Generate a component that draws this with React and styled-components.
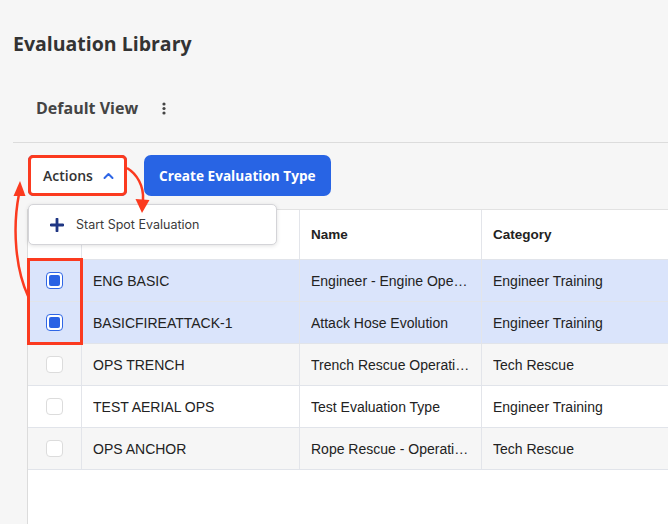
import React from "react";
import styled, { createGlobalStyle } from "styled-components";

const GlobalStyle = createGlobalStyle`
  html, body {
    margin: 0;
    padding: 0;
    background: #f6f6f6;
  }
  * {
    box-sizing: border-box;
  }
`;

const RED = "#fb3a1f";

const Page = styled.div`
  position: relative;
  width: 668px;
  height: 524px;
  overflow: hidden;
  background: #f6f6f6;
  font-family: "Open Sans", sans-serif;
`;

const Title = styled.h1`
  margin: 0;
  padding: 31px 0 0 13px;
  font-size: 19.5px;
  line-height: 26px;
  font-weight: 700;
  color: #333;
`;

const ViewBar = styled.div`
  display: flex;
  align-items: center;
  gap: 24px;
  height: 40px;
  margin-top: 31px;
  padding-left: 36px;
  font-size: 16px;
  font-weight: 700;
  color: #444;
`;

const Divider = styled.hr`
  margin: 14px 0 0 13px;
  border: 0;
  border-top: 1px solid #dcdcdc;
`;

const Toolbar = styled.div`
  position: relative;
  display: flex;
  align-items: center;
  gap: 17px;
  padding: 12px 0 0 28px;
  height: 53px;
  margin-bottom: 13px;
`;

const ActionsButton = styled.button`
  display: flex;
  align-items: center;
  gap: 10px;
  height: 41px;
  width: 99px;
  padding: 0 0 0 14px;
  border: 1px solid #3b6fe6;
  border-radius: 5px;
  background: #fff;
  font-family: "Open Sans", sans-serif;
  font-size: 14px;
  font-weight: 600;
  color: #333;
  outline: 3px solid ${RED};
  outline-offset: -3px;
`;

const PrimaryButton = styled.button`
  height: 41px;
  padding: 0 15px;
  border: 0;
  border-radius: 7px;
  background: #2864e4;
  color: #fff;
  font-family: "Open Sans", sans-serif;
  font-size: 13.6px;
  font-weight: 700;
`;

const Menu = styled.div`
  position: absolute;
  left: 28px;
  top: 61px;
  width: 249px;
  height: 41px;
  display: flex;
  align-items: center;
  gap: 12px;
  padding-left: 21px;
  background: #fff;
  border: 1px solid #d4d4d8;
  border-radius: 5px;
  box-shadow: 0 1px 4px rgba(0, 0, 0, 0.12);
  font-family: Inter, sans-serif;
  font-size: 12.5px;
  color: #3a3a3a;
  z-index: 5;
`;

const Table = styled.div`
  margin-left: 27px;
  height: 340px;
  border-left: 1px solid #dcdcdc;
  border-top: 1px solid #e2e2e2;
  background: #fff;
  font-family: "Liberation Sans", Arial, sans-serif;
  font-size: 14px;
  color: #222;
`;

const Row = styled.div`
  display: grid;
  grid-template-columns: 54px 218px 182px 1fr;
  height: ${({ $head }) => ($head ? "50px" : "42px")};
  background: ${({ $selected, $shade }) =>
    $selected ? "#dae4fb" : $shade ? "#f6f6f6" : "#fff"};
  border-bottom: 1px solid #e1e4ea;
`;

const Cell = styled.div`
  display: flex;
  align-items: center;
  justify-content: ${({ $center }) => ($center ? "center" : "flex-start")};
  padding: 0 ${({ $center }) => ($center ? "0" : "11px")};
  border-right: 1px solid #e3e5ea;
  font-weight: ${({ $head }) => ($head ? 700 : 400)};
  font-size: ${({ $head }) => ($head ? "13.5px" : "14px")};
  min-width: 0;

  &:last-child {
    border-right: 0;
  }

  span {
    white-space: nowrap;
    overflow: hidden;
    text-overflow: ellipsis;
  }
`;

const Check = styled.div`
  width: 17px;
  height: 17px;
  border-radius: 4px;
  border: 1px solid ${({ $on }) => ($on ? "#2f66e6" : "#dcdcdc")};
  background: #fff;
  padding: 2px;

  &::after {
    content: "";
    display: ${({ $on }) => ($on ? "block" : "none")};
    width: 100%;
    height: 100%;
    border-radius: 2px;
    background: #2a62e4;
  }
`;

const Overlay = styled.svg`
  position: absolute;
  left: 0;
  top: 0;
  pointer-events: none;
  z-index: 10;
`;

const rows = [
  { code: "ENG BASIC", name: "Engineer - Engine Operations", cat: "Engineer Training", on: true },
  { code: "BASICFIREATTACK-1", name: "Attack Hose Evolution", cat: "Engineer Training", on: true },
  { code: "OPS TRENCH", name: "Trench Rescue Operations", cat: "Tech Rescue" },
  { code: "TEST AERIAL OPS", name: "Test Evaluation Type", cat: "Engineer Training" },
  { code: "OPS ANCHOR", name: "Rope Rescue - Operations", cat: "Tech Rescue" },
];

const Kebab = () => (
  <svg width="4" height="13" viewBox="0 0 4 13">
    <circle cx="2" cy="2" r="1.6" fill="#444" />
    <circle cx="2" cy="6.5" r="1.6" fill="#444" />
    <circle cx="2" cy="11" r="1.6" fill="#444" />
  </svg>
);

const Chevron = () => (
  <svg width="11" height="8" viewBox="0 0 11 8">
    <path d="M1.5 6 L5.5 2 L9.5 6" fill="none" stroke="#2f66e6" strokeWidth="2" strokeLinecap="round" strokeLinejoin="round" />
  </svg>
);

const Plus = () => (
  <svg width="14" height="14" viewBox="0 0 14 14">
    <path d="M7 1 V13 M1 7 H13" stroke="#1f3683" strokeWidth="2.8" strokeLinecap="round" />
  </svg>
);

export default function App() {
  return (
    <Page>
      <GlobalStyle />
      <Title>Evaluation Library</Title>
      <ViewBar>
        Default View
        <Kebab />
      </ViewBar>
      <Divider />
      <Toolbar>
        <ActionsButton>
          Actions
          <Chevron />
        </ActionsButton>
        <PrimaryButton>Create Evaluation Type</PrimaryButton>
        <Menu>
          <Plus />
          Start Spot Evaluation
        </Menu>
      </Toolbar>
      <Table>
        <Row $head>
          <Cell $center />
          <Cell $head />
          <Cell $head>
            <span>Name</span>
          </Cell>
          <Cell $head>
            <span>Category</span>
          </Cell>
        </Row>
        {rows.map((r, i) => (
          <Row key={r.code} $selected={r.on} $shade={i % 2 === 0}>
            <Cell $center>
              <Check $on={r.on} />
            </Cell>
            <Cell>
              <span>{r.code}</span>
            </Cell>
            <Cell>
              <span>{r.name}</span>
            </Cell>
            <Cell>
              <span>{r.cat}</span>
            </Cell>
          </Row>
        ))}
      </Table>
      <Overlay width="668" height="524">
        <rect x="28.5" y="259.5" width="53" height="84" fill="none" stroke={RED} strokeWidth="3" />
        <path d="M28 296 C 16 270, 12 230, 19 194" fill="none" stroke={RED} strokeWidth="2.5" />
        <path d="M20 181 L 13.5 196 L 25.5 196 Z" fill={RED} />
        <path d="M127 168 C 137 174, 144 186, 143 200" fill="none" stroke={RED} strokeWidth="2.5" />
        <path d="M142 213 L 135.5 199 L 149.5 200 Z" fill={RED} />
      </Overlay>
    </Page>
  );
}
